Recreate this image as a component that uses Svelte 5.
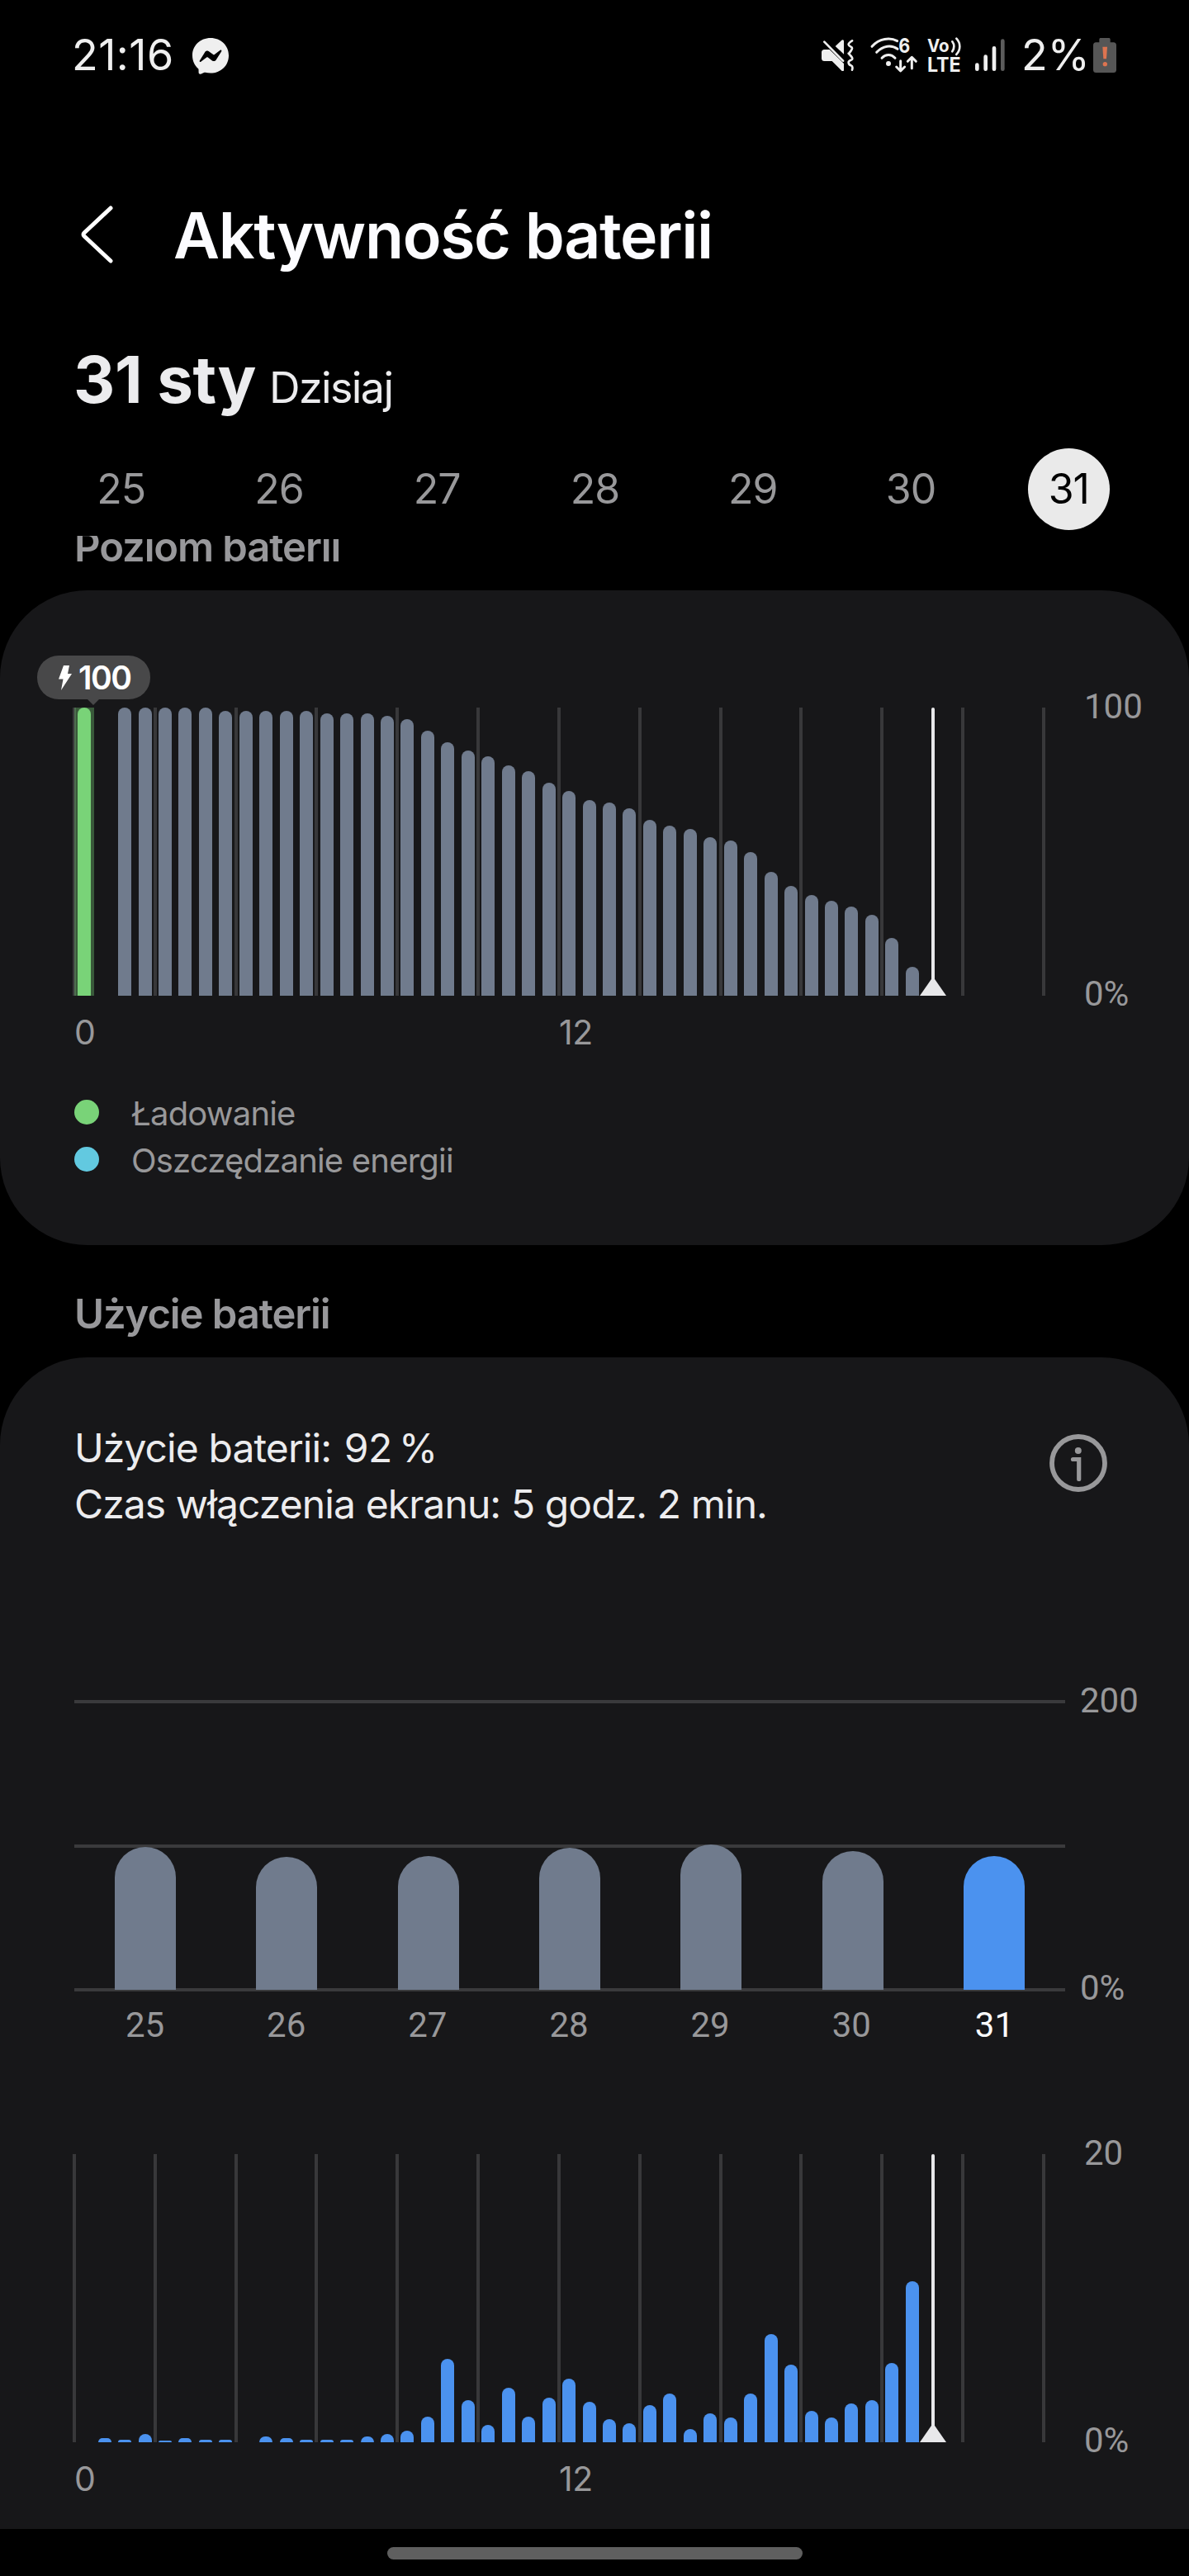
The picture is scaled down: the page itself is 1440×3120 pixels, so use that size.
<script>
  const days = [25, 26, 27, 28, 29, 30, 31];
  const selected = 31;

  // one value per half hour, starting at midnight
  const level = [
    100, 0, 100, 100, 100, 100, 100, 99, 99, 99, 99, 99, 98, 98, 98, 97, 96, 92, 88, 85, 83, 80, 78, 74,
    71, 68, 67, 65, 61, 59, 58, 55, 54, 50, 43, 38, 35, 33, 31, 28, 20, 10, 0, 0, 0, 0, 0, 0
  ];

  const usage = [
    0, 0.3, 0.2, 0.6, 0.1, 0.3, 0.2, 0.2, 0, 0.4, 0.3, 0.2, 0.2, 0.2, 0.4, 0.6, 0.8, 1.8, 5.8, 2.9, 1.2, 3.8, 1.8, 3.1,
    4.4, 2.8, 1.6, 1.3, 2.6, 3.4, 0.9, 2, 1.7, 3.4, 7.5, 5.4, 2.2, 1.7, 2.7, 2.9, 5.5, 11.2, 0, 0, 0, 0, 0, 0
  ];

  const weekly = [
    { day: 25, value: 98.9 },
    { day: 26, value: 92.3 },
    { day: 27, value: 92.7 },
    { day: 28, value: 98.7 },
    { day: 29, value: 100.8 },
    { day: 30, value: 96.2 },
    { day: 31, value: 92.7 }
  ];

  const gridLines = Array.from({ length: 13 });
</script>

<div class="screen">
  <div class="status">
    <div class="status-left">
      <span class="clock">21:16</span>
      <svg class="messenger" viewBox="0 0 44 44">
        <path fill="#efefef" d="M22 0C9.600 0 0 9 0 21.200c0 6.400 2.600 11.900 6.900 15.700.4.300.6.800.6 1.300l.1 3.900c.1 1.300 1.300 2.100 2.500 1.600l4.400-1.900c.4-.2.8-.2 1.200-.1 2 .6 4.100.8 6.300.8 12.400 0 22-9 22-21.300C44 9 34.400 0 22 0z" />
        <path fill="#000" d="M8.800 27.400l6.500-10.300c1-1.600 3.200-2 4.700-.9l5.200 3.900c.5.400 1.100.4 1.600 0l6.900-5.300c.9-.7 2.200.4 1.500 1.400l-6.500 10.300c-1 1.600-3.200 2-4.700.9l-5.200-3.900c-.5-.4-1.100-.4-1.600 0l-6.900 5.300c-.9.700-2.100-.4-1.500-1.400z" />
      </svg>
    </div>
    <div class="status-right">
      <svg class="mute" viewBox="0 0 116 116">
        <g fill="#efefef">
          <path d="M10 36h19l52 51v23c0 5-4 6-8 3L38 78H10C4 78 0 74 0 68V46c0-6 4-10 10-10z" />
          <path d="M50 24L72 3c4-4 9-2 9 3v47z" />
        </g>
        <g fill="none" stroke="#efefef" stroke-width="8" stroke-linecap="round" stroke-linejoin="round">
          <path d="M10 8L78 77" />
          <path d="M111 4q-14 9-13 14t9 8 0 14-9 10 9 10 0 14-9 10 9 10 4 16" />
        </g>
      </svg>
      <svg class="wifi" viewBox="0 0 174 130">
        <g fill="none" stroke="#efefef" stroke-width="9" stroke-linecap="round">
          <path d="M6 34C32 4 72 0 98 14" />
          <path d="M23 55c23-25 54-28 76-12" />
          <path d="M42 76c15-15 34-15 48 0" />
          <path d="M110 86v36M95 108l15 15 15-15" stroke-linejoin="round" />
          <path d="M151 113V75M136 88l15-15 15 15" stroke-linejoin="round" />
        </g>
        <circle cx="66" cy="96" r="9" fill="#efefef" />
        <text x="103" y="58" textLength="42" lengthAdjust="spacingAndGlyphs" class="wifi-gen">6</text>
      </svg>
      <svg class="volte" viewBox="0 0 124 130">
        <text x="0" y="53" textLength="80" lengthAdjust="spacingAndGlyphs" class="volte-text">Vo</text>
        <text x="0" y="126" textLength="122" lengthAdjust="spacingAndGlyphs" class="volte-text lte">LTE</text>
        <g fill="none" stroke="#efefef" stroke-width="8" stroke-linecap="round">
          <path d="M91 16c8 11 8 24 0 36" />
          <path d="M106 5c16 17 16 40 0 58" />
        </g>
      </svg>
      <svg class="signal" viewBox="0 0 108 118">
        <g stroke-width="14" stroke-linecap="round">
          <path d="M7 95v15M38 65v45M69 34v76" stroke="#efefef" />
          <path d="M100 8v102" stroke="#5c5c5c" />
        </g>
      </svg>
      <span class="percent">2%</span>
      <svg class="battery" viewBox="0 0 84 126">
        <path fill="#565656" d="M28 0h28c4 0 6 2 6 6v10h12c6 0 10 4 10 10v90c0 6-4 10-10 10H10c-6 0-10-4-10-10V26c0-6 4-10 10-10h12V6c0-4 2-6 6-6z" />
        <path fill="#dd7450" d="M34 32h17l-3 44h-11z" />
        <circle cx="43" cy="95" r="8" fill="#dd7450" />
      </svg>
    </div>
  </div>

  <div class="title-bar">
    <svg class="back" viewBox="0 0 40 70">
      <path d="M37 3L5 33q-2 2 0 4L37 67" fill="none" stroke="#fff" stroke-width="5" stroke-linecap="round" />
    </svg>
    <h1>Aktywność baterii</h1>
  </div>

  <div class="date">
    <span class="date-main">31 sty</span>
    <span class="date-sub">Dzisiaj</span>
  </div>

  <div class="days">
    {#each days as day}
      <div class="day-slot">
        <span class="day" class:selected={day === selected}>{day}</span>
      </div>
    {/each}
  </div>

  <div class="scroller">
    <h2 class="first">Poziom baterii</h2>
    <div class="card level-card">
      <div class="chart">
        <div class="plot">
          <div class="grid-lines">
            {#each gridLines as _}<i></i>{/each}
          </div>
          <div class="bars">
            {#each level as value, i}
              <div class="slot" class:charging={i === 0}>
                <div class="bar" style="height: {value}%"></div>
              </div>
            {/each}
          </div>
          <div class="now"></div>
          <div class="tooltip">
            <svg class="bolt" viewBox="0 0 16 30">
              <path d="M6 0h7L11 10h5L3 30 5.500 16.500H0z" fill="#fff" />
            </svg>
            <span>100</span>
          </div>
        </div>
        <div class="y-axis"><span>100</span><span>0%</span></div>
      </div>
      <div class="x-axis"><span>0</span><span>12</span></div>
      <div class="legend">
        <div class="legend-row"><i class="dot green"></i><span>Ładowanie</span></div>
        <div class="legend-row"><i class="dot cyan"></i><span>Oszczędzanie energii</span></div>
      </div>
    </div>

    <h2>Użycie baterii</h2>
    <div class="card usage-card">
      <div class="summary">
        <div>
          <p>Użycie baterii: <span class="used">92&#8201;%</span></p>
          <p>Czas włączenia ekranu: 5 godz. 2 min.</p>
        </div>
        <svg class="info" viewBox="0 0 70 70">
          <g fill="none" stroke="#98989a">
            <circle cx="35" cy="35" r="32" stroke-width="5.800" />
            <path d="M28.500 30.500h7.200v24" stroke-width="5.200" stroke-linecap="round" />
          </g>
          <circle cx="34.800" cy="20" r="4" fill="#98989a" />
        </svg>
      </div>

      <div class="chart week">
        <div class="plot">
          <div class="h-lines"><i></i><i></i><i></i></div>
          <div class="bars">
            {#each weekly as item}
              <div class="slot">
                <div class="bar" class:today={item.day === selected} style="height: {item.value / 2}%"></div>
              </div>
            {/each}
          </div>
        </div>
        <div class="y-axis"><span>200</span><span>0%</span></div>
      </div>
      <div class="week-labels">
        {#each weekly as item}
          <span class:today={item.day === selected}>{item.day}</span>
        {/each}
      </div>

      <div class="chart hourly">
        <div class="plot">
          <div class="grid-lines">
            {#each gridLines as _}<i></i>{/each}
          </div>
          <div class="bars">
            {#each usage as value}
              <div class="slot">
                <div class="bar" style="height: {value * 5}%"></div>
              </div>
            {/each}
          </div>
          <div class="now"></div>
        </div>
        <div class="y-axis"><span>20</span><span>0%</span></div>
      </div>
      <div class="x-axis"><span>0</span><span>12</span></div>
    </div>
  </div>

  <div class="nav"><div class="pill"></div></div>
</div>

<style>
:global(body) {
  margin: 0;
  background: #000;
}

.screen {
  width: 1440px;
  height: 3120px;
  overflow: hidden;
  background: #000;
  color: #ececee;
  font-family: Inter, Roboto, sans-serif;
}

svg {
  display: block;
  flex: none;
}

h1,
h2,
p {
  margin: 0;
}

/* status bar */
.status {
  display: flex;
  align-items: center;
  justify-content: space-between;
  height: 134px;
  padding: 0 88px 0 87px;
  box-sizing: border-box;
  color: #efefef;
  font-size: 52px;
  line-height: 60px;
}

.status-left,
.status-right {
  display: flex;
  align-items: center;
}

.clock {
  margin-top: -1px;
  width: 146px;
  letter-spacing: 0.500px;
}

.messenger {
  width: 44px;
  height: 44px;
  margin-top: 2px;
}

.mute {
  width: 38.700px;
  height: 38.700px;
  margin-right: 20px;
}

.wifi {
  width: 58px;
  height: 43.300px;
  margin-right: 11px;
  overflow: visible;
}

.wifi-gen {
  fill: #efefef;
  font-size: 74px;
  font-weight: 700;
}

.volte {
  width: 41.300px;
  height: 43.300px;
  margin-right: 17px;
  overflow: visible;
}

.volte-text {
  fill: #efefef;
  font-size: 66px;
  font-weight: 700;
}

.lte {
  font-size: 73px;
}

.signal {
  width: 36px;
  height: 39.300px;
}

.percent {
  margin: -1px 0 0 20px;
  width: 87px;
}

.battery {
  width: 28px;
  height: 42px;
}

/* header */
.title-bar {
  display: flex;
  align-items: center;
  height: 210px;
  margin-top: 46px;
  padding-left: 97px;
}

.back {
  width: 40px;
  height: 70px;
  margin-top: -2px;
}

h1 {
  margin-left: 73px;
  font-size: 77px;
  font-weight: 600;
  line-height: 90px;
  letter-spacing: -1.350px;
  color: #fcfcff;
  white-space: nowrap;
}

.date {
  display: flex;
  align-items: baseline;
  height: 140px;
  padding-left: 89px;
  line-height: 140px;
  white-space: nowrap;
}

.date-main {
  font-size: 78px;
  font-weight: 700;
  letter-spacing: -0.400px;
}

.date-sub {
  margin-left: 16px;
  font-size: 52px;
  letter-spacing: -1.600px;
}

.days {
  display: flex;
  height: 119px;
  padding: 13px 50px 0 51px;
  box-sizing: border-box;
}

.day-slot {
  flex: 1;
  display: flex;
  justify-content: center;
}

.day {
  width: 99px;
  height: 99px;
  border-radius: 50%;
  font-size: 50px;
  line-height: 99px;
  text-align: center;
  letter-spacing: -1px;
  color: #98989a;
}

.day.selected {
  background: #eaeaea;
  color: #000;
}

/* scrolling content */
.scroller {
  height: 2414px;
  overflow: hidden;
}

h2 {
  height: 136px;
  padding: 54px 0 0 90px;
  box-sizing: border-box;
  font-size: 49px;
  font-weight: 600;
  line-height: 60px;
  letter-spacing: -1.100px;
  color: #98989b;
}

h2.first {
  margin-top: -70px;
}

.card {
  background: #171719;
  box-sizing: border-box;
}

.level-card {
  height: 793px;
  padding: 142px 0 0 90px;
  border-radius: 106px;
}

.usage-card {
  height: 1600px;
  padding: 76px 0 0 90px;
  border-radius: 106px 106px 0 0;
}

/* charts */
.chart {
  display: flex;
  height: 349px;
}

.plot {
  position: relative;
  display: grid;
  width: 1174px;
  height: 349px;
}

.grid-lines,
.h-lines,
.bars {
  grid-area: 1 / 1;
  display: flex;
}

.grid-lines {
  justify-content: space-between;
  margin: 0 -2px;
}

.grid-lines i {
  width: 4px;
  background: #38383a;
}

.h-lines {
  flex-direction: column;
  justify-content: space-between;
  margin: -2px 0;
}

.h-lines i {
  height: 4px;
  background: #3a3a3c;
}

.bars {
  z-index: 1;
}

.slot {
  flex: 1;
  display: flex;
  justify-content: center;
  align-items: flex-end;
}

.slot .bar {
  width: 16px;
  border-radius: 8px 8px 0 0;
  background: #707b8d;
}

.slot.charging {
  background: rgba(121, 211, 120, 0.350);
}

.slot.charging .bar {
  background: #79d378;
}

.hourly .slot .bar {
  background: #4b92ef;
}

.week .plot {
  width: 1200px;
}

.week .slot .bar {
  width: 74px;
  border-radius: 37px 37px 0 0;
}

.week .slot .bar.today {
  background: #4b92ef;
}

/* current time marker */
.now {
  position: absolute;
  z-index: 2;
  left: 1038px;
  top: 0;
  width: 4px;
  height: 100%;
  border-radius: 2px;
  background: #e8e8ea;
}

.now::after {
  content: '';
  position: absolute;
  left: -14px;
  bottom: 0;
  border: 16px solid transparent;
  border-top: 0;
  border-bottom: 23px solid #e8e8ea;
}

.tooltip {
  position: absolute;
  z-index: 2;
  left: -45px;
  top: -63px;
  display: flex;
  align-items: center;
  width: 137px;
  height: 53px;
  padding-left: 26px;
  box-sizing: border-box;
  border-radius: 26px;
  background: #484849;
  color: #fff;
  font-size: 39px;
  font-weight: 600;
  line-height: 55px;
  letter-spacing: -1.500px;
}

.tooltip::after {
  content: '';
  position: absolute;
  left: 60px;
  top: 52px;
  border: 8px solid transparent;
  border-bottom: 0;
  border-top: 8px solid #484849;
}

.bolt {
  width: 16px;
  height: 30px;
  margin-right: 8px;
}

.y-axis {
  display: flex;
  flex-direction: column;
  justify-content: space-between;
  margin: -26px 0 -23px 49px;
  font-family: Roboto, sans-serif;
  font-size: 42px;
  line-height: 50px;
  color: #98989a;
}

.week .y-axis {
  margin-left: 18px;
}

.x-axis {
  display: flex;
  width: 1174px;
  font-size: 41px;
  line-height: 88px;
  letter-spacing: -0.500px;
  color: #98989a;
}

.x-axis span {
  flex: 1;
}

.legend {
  margin-top: 24px;
}

.legend-row {
  display: flex;
  align-items: center;
  height: 57.500px;
  font-size: 40px;
  letter-spacing: -0.800px;
  color: #98989a;
}

.legend-row span {
  margin-top: 3px;
}

.dot {
  width: 30px;
  height: 30px;
  margin-right: 39px;
  border-radius: 50%;
}

.dot.green {
  background: #79d378;
}

.dot.cyan {
  background: #62c9e0;
}

.summary {
  display: flex;
  justify-content: space-between;
  height: 136px;
  padding-right: 99px;
  font-size: 48px;
  line-height: 68px;
  letter-spacing: -0.900px;
  white-space: nowrap;
}

.used {
  margin-left: 3px;
  letter-spacing: -0.500px;
}

.info {
  width: 70px;
  height: 70px;
  margin-top: 17px;
}

.week {
  margin-top: 205px;
}

.week-labels {
  display: flex;
  width: 1200px;
  font-family: Roboto, sans-serif;
  font-size: 42px;
  line-height: 85px;
  color: #98989a;
}

.week-labels span {
  flex: 1;
  text-align: center;
}

.week-labels .today {
  padding-left: 2px;
  color: #fafafc;
}

.hourly {
  margin-top: 114px;
}

/* gesture bar */
.nav {
  display: flex;
  justify-content: center;
  height: 57px;
  padding-top: 22px;
  box-sizing: border-box;
}

.pill {
  width: 503px;
  height: 15px;
  border-radius: 8px;
  background: #5f5f5f;
}
</style>
